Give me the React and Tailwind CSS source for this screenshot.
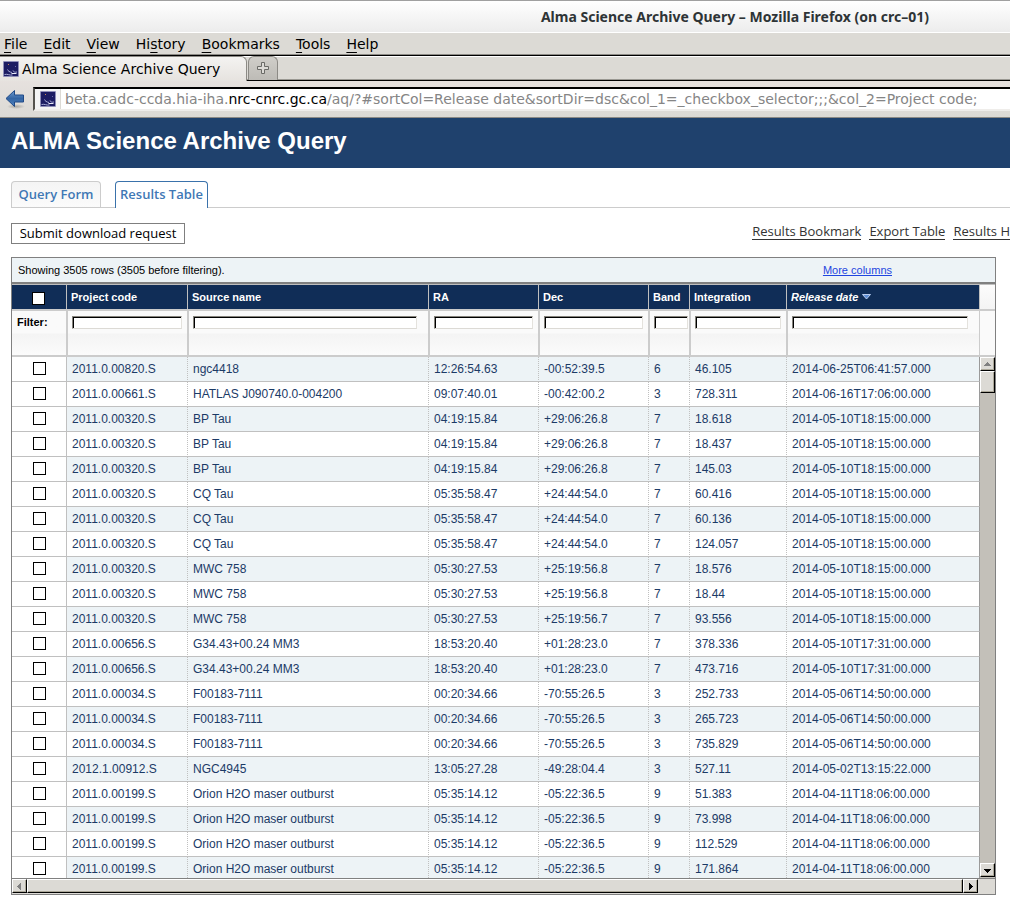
import React from "react";

const COLUMNS = [
  { name: "Project code", width: "w-[121px]" },
  { name: "Source name", width: "w-[241px]" },
  { name: "RA", width: "w-[110px]" },
  { name: "Dec", width: "w-[110px]" },
  { name: "Band", width: "w-[41px]" },
  { name: "Integration", width: "w-[97px]" },
  { name: "Release date", width: "", sorted: true },
];

const ROWS = [
  ["2011.0.00820.S", "ngc4418", "12:26:54.63", "-00:52:39.5", "6", "46.105", "2014-06-25T06:41:57.000"],
  ["2011.0.00661.S", "HATLAS J090740.0-004200", "09:07:40.01", "-00:42:00.2", "3", "728.311", "2014-06-16T17:06:00.000"],
  ["2011.0.00320.S", "BP Tau", "04:19:15.84", "+29:06:26.8", "7", "18.618", "2014-05-10T18:15:00.000"],
  ["2011.0.00320.S", "BP Tau", "04:19:15.84", "+29:06:26.8", "7", "18.437", "2014-05-10T18:15:00.000"],
  ["2011.0.00320.S", "BP Tau", "04:19:15.84", "+29:06:26.8", "7", "145.03", "2014-05-10T18:15:00.000"],
  ["2011.0.00320.S", "CQ Tau", "05:35:58.47", "+24:44:54.0", "7", "60.416", "2014-05-10T18:15:00.000"],
  ["2011.0.00320.S", "CQ Tau", "05:35:58.47", "+24:44:54.0", "7", "60.136", "2014-05-10T18:15:00.000"],
  ["2011.0.00320.S", "CQ Tau", "05:35:58.47", "+24:44:54.0", "7", "124.057", "2014-05-10T18:15:00.000"],
  ["2011.0.00320.S", "MWC 758", "05:30:27.53", "+25:19:56.8", "7", "18.576", "2014-05-10T18:15:00.000"],
  ["2011.0.00320.S", "MWC 758", "05:30:27.53", "+25:19:56.8", "7", "18.44", "2014-05-10T18:15:00.000"],
  ["2011.0.00320.S", "MWC 758", "05:30:27.53", "+25:19:56.7", "7", "93.556", "2014-05-10T18:15:00.000"],
  ["2011.0.00656.S", "G34.43+00.24 MM3", "18:53:20.40", "+01:28:23.0", "7", "378.336", "2014-05-10T17:31:00.000"],
  ["2011.0.00656.S", "G34.43+00.24 MM3", "18:53:20.40", "+01:28:23.0", "7", "473.716", "2014-05-10T17:31:00.000"],
  ["2011.0.00034.S", "F00183-7111", "00:20:34.66", "-70:55:26.5", "3", "252.733", "2014-05-06T14:50:00.000"],
  ["2011.0.00034.S", "F00183-7111", "00:20:34.66", "-70:55:26.5", "3", "265.723", "2014-05-06T14:50:00.000"],
  ["2011.0.00034.S", "F00183-7111", "00:20:34.66", "-70:55:26.5", "3", "735.829", "2014-05-06T14:50:00.000"],
  ["2012.1.00912.S", "NGC4945", "13:05:27.28", "-49:28:04.4", "3", "527.11", "2014-05-02T13:15:22.000"],
  ["2011.0.00199.S", "Orion H2O maser outburst", "05:35:14.12", "-05:22:36.5", "9", "51.383", "2014-04-11T18:06:00.000"],
  ["2011.0.00199.S", "Orion H2O maser outburst", "05:35:14.12", "-05:22:36.5", "9", "73.998", "2014-04-11T18:06:00.000"],
  ["2011.0.00199.S", "Orion H2O maser outburst", "05:35:14.12", "-05:22:36.5", "9", "112.529", "2014-04-11T18:06:00.000"],
  ["2011.0.00199.S", "Orion H2O maser outburst", "05:35:14.12", "-05:22:36.5", "9", "171.864", "2014-04-11T18:06:00.000"],
];

function SiteIcon() {
  return (
    <svg width="16" height="16" viewBox="0 0 16 16" className="shrink-0" aria-hidden="true">
      <rect x="0" y="0" width="16" height="16" rx="1" fill="#8f8fb8" />
      <rect x="1" y="1" width="14" height="14" fill="#1c1c62" />
      <path d="M4.500 8.500c.5 1.500 2 2.500 4.500 3M10 9.500c.5 1.500 2 2 4 1.500M1.500 13.500c3-.8 5 1 8 .5" fill="none" stroke="#a9acd6" />
      <path d="M8.500 12.500h5" stroke="#e8e8f6" />
      <rect x="5" y="3" width="1" height="1" fill="#c9885a" />
      <rect x="12" y="5" width="1" height="1" fill="#6d6da8" />
    </svg>
  );
}

function BackArrow() {
  return (
    <svg width="20" height="20" viewBox="0 0 20 20" aria-hidden="true">
      <defs>
        <linearGradient id="arrow" x1="0" y1="0" x2="0" y2="1">
          <stop offset="0" stopColor="#6c9bd0" />
          <stop offset="0.5" stopColor="#3465a4" />
          <stop offset="1" stopColor="#4f83c0" />
        </linearGradient>
        <radialGradient id="arrow-shadow">
          <stop offset="0" stopColor="#a8a6a1" />
          <stop offset="1" stopColor="#a8a6a1" stopOpacity="0" />
        </radialGradient>
      </defs>
      <ellipse cx="11" cy="17.500" rx="9" ry="2.500" fill="url(#arrow-shadow)" />
      <path d="M1 9.500 9.500 1.500v4.500h9v7h-9v4.500z" fill="url(#arrow)" stroke="#204a87" strokeLinejoin="round" />
    </svg>
  );
}

function Arrow({ points, dim }) {
  return (
    <svg width="7" height="7" viewBox="0 0 7 7" shapeRendering="crispEdges" aria-hidden="true">
      <polygon points={points} fill={dim ? "#808080" : "#000000"} />
    </svg>
  );
}

const BEVEL =
  "flex shrink-0 items-center justify-center border border-t-white border-l-white border-r-black border-b-black bg-[#dcdad5] shadow-[inset_-1px_-1px_0_#aca899]";

const MENU = [
  ["", "F", "ile"],
  ["", "E", "dit"],
  ["", "V", "iew"],
  ["Hi", "s", "tory"],
  ["", "B", "ookmarks"],
  ["", "T", "ools"],
  ["", "H", "elp"],
];

function BrowserChrome() {
  return (
    <header className="font-['DejaVu_Sans',sans-serif] text-[14px] text-black">
      <div className="flex h-[33px] items-center justify-end border-t border-b border-t-[#a0a0a0] border-b-white bg-linear-to-b from-white to-[#ececec] pr-[81px] pb-px">
        <span className="font-['Noto_Sans',sans-serif] text-[14px] font-bold whitespace-nowrap text-[#2e3436]">
          Alma Science Archive Query – Mozilla Firefox (on crc–01)
        </span>
      </div>
      <nav className="h-[22px] border-b border-[#8c8a85] bg-[#dcdad5]">
        <ul className="flex h-full items-center gap-4 pt-px pl-1">
          {MENU.map(([before, key, after]) => (
            <li key={key + after}>
              <button type="button" className="block whitespace-nowrap">
                {before}
                <span className="underline underline-offset-3">{key}</span>
                {after}
              </button>
            </li>
          ))}
        </ul>
      </nav>
      <div className="flex h-[26px] border-t border-b border-black bg-[#dcdad5] shadow-[inset_0_1px_0_#fff,inset_0_-1px_0_#9a9892]">
        <div className="-mb-px flex w-[247px] items-center gap-[3px] rounded-tr-md border-t border-r border-[#8c8a85] bg-linear-to-b from-[#f4f3f1] to-[#e6e3df] pl-[3px]">
          <SiteIcon />
          <span className="whitespace-nowrap">Alma Science Archive Query</span>
        </div>
        <button type="button" aria-label="Open a new tab" className="ml-px flex w-[30px] items-center justify-center rounded-t-md border border-b-0 border-[#8c8a85] bg-linear-to-b from-[#d0cec9] to-[#bdbbb6]">
          <svg width="13" height="13" viewBox="0 0 13 13" aria-hidden="true">
            <path d="M4.500.5h3v4h4v3h-4v4h-3v-4h-4v-3h4z" fill="#dddbd7" stroke="#6a6a66" />
          </svg>
        </button>
      </div>
      <div className="flex h-[37px] items-center border-b border-[#8c8a85] bg-linear-to-b from-[#e6e1de] to-[#dcdad5] pl-[5px]">
        <button type="button" aria-label="Back" className="mr-2">
          <BackArrow />
        </button>
        <div className="flex h-6 min-w-0 flex-1 items-center border-t-2 border-b-2 border-l-2 border-t-black border-b-[#efedea] border-l-[#55534e] bg-white">
          <span className="flex h-full w-[26px] shrink-0 items-center justify-center border-r border-[#dcdad5] bg-[#f4f4f4]">
            <SiteIcon />
          </span>
          <span className="overflow-hidden pl-1 whitespace-nowrap text-[#858585]">
            beta.cadc-ccda.hia-iha.<span className="text-black">nrc-cnrc.gc.ca</span>/aq/?#sortCol=Release date&amp;sortDir=dsc&amp;col_1=_checkbox_selector;;;&amp;col_2=Project code;
          </span>
        </div>
      </div>
    </header>
  );
}

const CHECKBOX = "block size-[13px] appearance-none border border-black bg-white checked:bg-black";

function ResultsTable() {
  return (
    <table className="w-full table-fixed border-separate border-spacing-0 text-left text-[11px] leading-4">
      <colgroup>
        <col className="w-[55px]" />
        {COLUMNS.map((c) => (
          <col key={c.name} className={c.width} />
        ))}
      </colgroup>
      <thead>
        <tr className="bg-[#102d57] text-white">
          <th className="h-[25px] border-t border-r border-[#bfbfbf] pt-[2px] pl-5">
            <input type="checkbox" aria-label="Select all rows" className={CHECKBOX} />
          </th>
          {COLUMNS.map((c) => (
            <th key={c.name} className="h-[25px] border-t border-r border-[#bfbfbf] pl-1 font-bold whitespace-nowrap">
              {c.sorted ? (
                <span className="flex items-center gap-1 italic">
                  {c.name}
                  <svg width="9" height="6" viewBox="0 0 9 6" aria-hidden="true">
                    <path d="M.5.5h8l-4 4.500z" fill="#5f8fd6" stroke="#b9cdf0" />
                  </svg>
                </span>
              ) : (
                c.name
              )}
            </th>
          ))}
        </tr>
        <tr className="bg-linear-to-b from-[#fafafa] from-50% via-[#f4f4f4] via-52% to-[#fcfcfc]">
          <th className="h-12 border-t-2 border-r border-b-2 border-[#cccccc] pt-[3px] pl-[5px] align-top">Filter:</th>
          {COLUMNS.map((c) => (
            <td key={c.name} className="h-12 border-t-2 border-r border-b-2 border-l border-[#cccccc] pt-[5px] pr-px pl-1 align-top">
              <input
                type="text"
                aria-label={"Filter " + c.name}
                className={
                  "block h-[13px] border border-t-[#85837c] border-r-[#e4e2dd] border-b-[#dcdad5] border-l-[#85837c] bg-white px-1 shadow-[inset_1px_1px_0_#000] outline-none " +
                  (c.name === "Band" ? "w-full" : c.name === "Source name" || c.sorted ? "w-[calc(100%-10px)]" : "w-[calc(100%-4px)]")
                }
              />
            </td>
          ))}
        </tr>
      </thead>
      <tbody className="text-[12px] text-[#1b3a66]">
        {ROWS.map((row, i) => (
          <tr key={i} className={i % 2 === 0 ? "bg-[#edf3f6]" : "bg-white"}>
            <td className="h-[25px] border-r border-b border-[#c0c0c0] bg-white pb-[2px] pl-[21px]">
              <input type="checkbox" aria-label={"Select row " + (i + 1)} className={CHECKBOX} />
            </td>
            {row.map((value, j) => (
              <td
                key={j}
                className="h-[25px] border-r border-b border-r-[#c0c0c0] border-b-[#c0c0c0] pl-[5px] whitespace-nowrap [border-right-style:dotted] last:border-r-[#9a9a9a] last:[border-right-style:solid]"
              >
                {value}
              </td>
            ))}
          </tr>
        ))}
      </tbody>
    </table>
  );
}

export default function App() {
  return (
    <div className="w-full overflow-hidden bg-white pb-[10px] font-['Liberation_Sans',Arial,sans-serif] text-black">
      <BrowserChrome />
      <div className="flex h-[50px] items-center bg-[#1f416d] pb-1 pl-[11px]">
        <h1 className="text-2xl font-bold whitespace-nowrap text-white">ALMA Science Archive Query</h1>
      </div>

      <main className="pt-[13px] pl-[11px]">
        <div className="flex h-[27px] items-stretch border-b border-[#cccccc] font-['Open_Sans',sans-serif] text-[13px] font-semibold text-[#3f78b5]">
          <button type="button" className="w-[90px] rounded-t-[4px] border border-b-0 border-[#cccccc] bg-linear-to-b from-[#f4f4f4] to-[#fbfbfb] whitespace-nowrap">
            Query Form
          </button>
          <button type="button" className="-mb-px ml-[14px] w-[93px] rounded-t-[4px] border border-b-0 border-[#3a72ab] bg-white whitespace-nowrap">
            Results Table
          </button>
        </div>

        <div className="mt-[15px] flex items-center justify-between font-['Open_Sans',sans-serif] text-[13px]">
          <button type="button" className="h-[21px] w-[174px] border border-[#7f7f7f] bg-white pb-px leading-4 whitespace-nowrap">
            Submit download request
          </button>
          <div className="flex gap-2 pb-1 leading-4 whitespace-nowrap text-[#333333]">
            <a href="#bookmark" className="border-b border-[#333333]">Results Bookmark</a>
            <a href="#export" className="border-b border-[#333333]">Export Table</a>
            <a href="#results" className="border-b border-[#333333]">Results H</a>
          </div>
        </div>

        <section className="mt-[13px] mr-[14px] border border-[#808080]">
          <div className="flex h-[26px] items-center justify-between border-b-2 border-[#808080] bg-[#edf3f6] pr-[103px] pl-1.5 text-[11px]">
            <p>Showing 3505 rows (3505 before filtering).</p>
            <a href="#columns" className="text-[#1f45e0] underline">More columns</a>
          </div>
          <div className="flex h-[594px]">
            <div className="min-w-0 flex-1 overflow-hidden">
              <ResultsTable />
            </div>
            <div className="flex w-[15px] shrink-0 flex-col">
              <div className="h-[25px] border-t border-[#bfbfbf] bg-linear-to-b from-[#fcfcfc] to-[#f4f4f4]" />
              <div className="h-12 border-t-2 border-b-2 border-[#cccccc] bg-[#fafafa]" />
              <div className="flex min-h-0 flex-1 flex-col bg-[#c3c0b9] pb-px">
                <div className={BEVEL + " h-[14px]"}>
                  <Arrow points="0,5 7,5 3.500,1" dim />
                </div>
                <div className={BEVEL + " h-[22px]"} />
                <div className="flex-1" />
                <div className={BEVEL + " h-[14px]"}>
                  <Arrow points="0,2 7,2 3.500,6" />
                </div>
              </div>
            </div>
          </div>
          <div className="flex h-4 border-t border-[#808080] bg-[#dcdad5] pb-px">
            <div className={BEVEL + " w-[15px]"}>
              <Arrow points="5,0 5,7 1,3.500" dim />
            </div>
            <div className="min-w-0 flex-1 border border-t-white border-r-black border-b-black border-l-white bg-[#dcdad5] shadow-[inset_-1px_-1px_0_#aca899]" />
            <div className={BEVEL + " w-[15px]"}>
              <Arrow points="2,0 2,7 6,3.500" />
            </div>
            <div className="w-[17px] shrink-0" />
          </div>
        </section>
      </main>
    </div>
  );
}
